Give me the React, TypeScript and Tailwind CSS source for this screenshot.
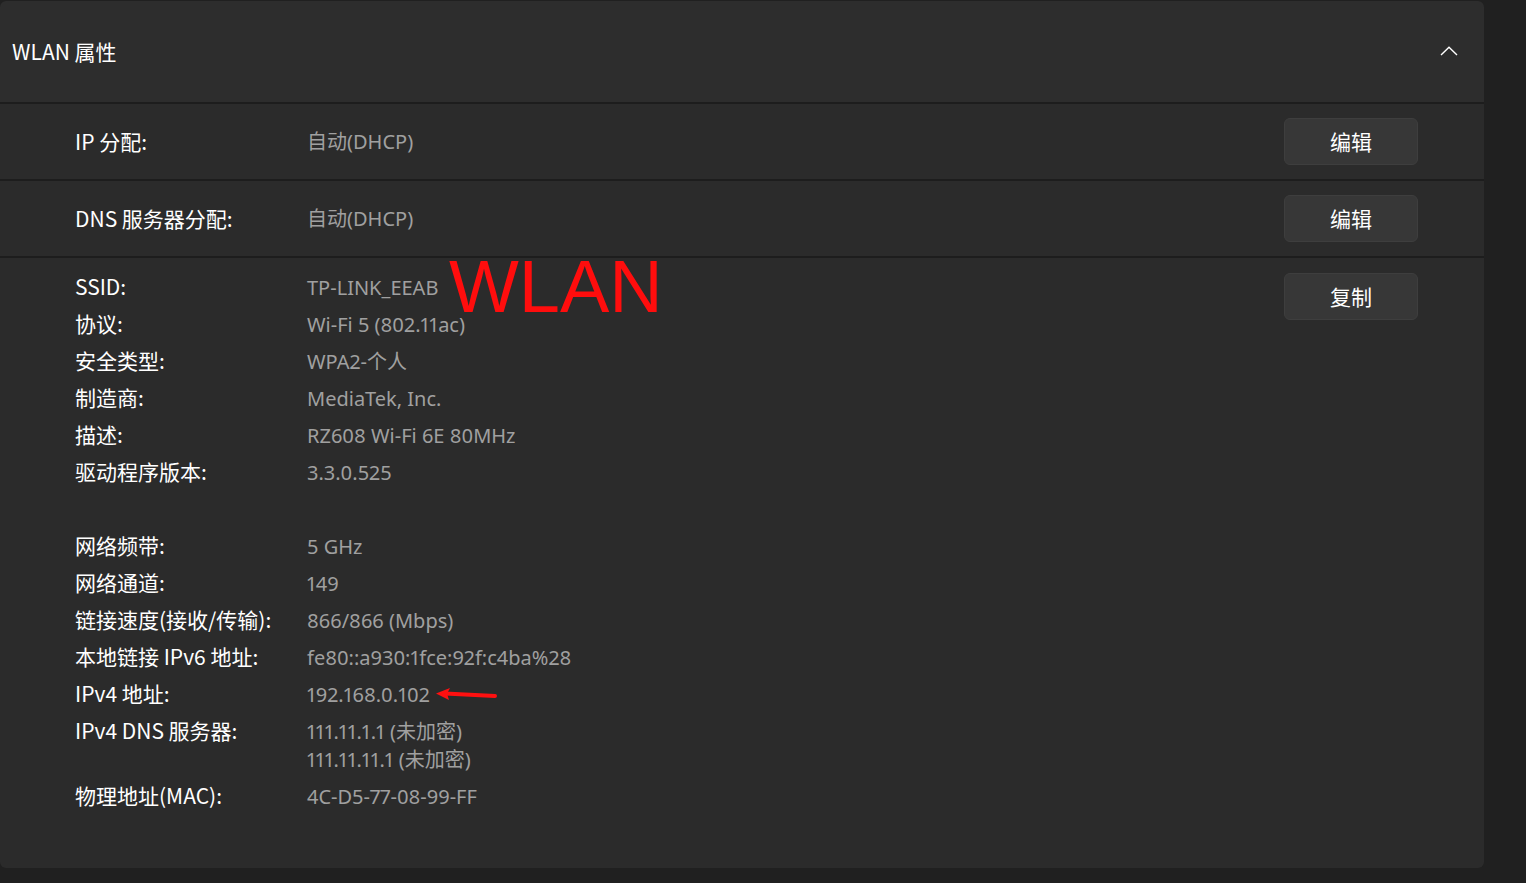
import React from "react";

const cjk = { fontFamily: '"Noto Sans CJK SC", sans-serif' };
const val = { fontFamily: '"Noto Sans", "Noto Sans CJK SC", sans-serif' };

type Row = { label: string; value: string[]; arrow?: boolean } | null;

const rows: Row[] = [
  { label: "SSID:", value: ["TP-LINK_EEAB"] },
  { label: "协议:", value: ["Wi-Fi 5 (802.11ac)"] },
  { label: "安全类型:", value: ["WPA2-个人"] },
  { label: "制造商:", value: ["MediaTek, Inc."] },
  { label: "描述:", value: ["RZ608 Wi-Fi 6E 80MHz"] },
  { label: "驱动程序版本:", value: ["3.3.0.525"] },
  null,
  { label: "网络频带:", value: ["5 GHz"] },
  { label: "网络通道:", value: ["149"] },
  { label: "链接速度(接收/传输):", value: ["866/866 (Mbps)"] },
  { label: "本地链接 IPv6 地址:", value: ["fe80::a930:1fce:92f:c4ba%28"] },
  { label: "IPv4 地址:", value: ["192.168.0.102"], arrow: true },
  { label: "IPv4 DNS 服务器:", value: ["111.11.1.1 (未加密)", "111.11.11.1 (未加密)"] },
  { label: "物理地址(MAC):", value: ["4C-D5-77-08-99-FF"] },
];

function Btn({ children }: { children: React.ReactNode }) {
  return (
    <button className="w-[134px] h-[47px] rounded-[6px] bg-[#373737] border border-[#3e3e3e] text-white text-[21px] leading-none flex items-center justify-center">
      {children}
    </button>
  );
}

function Arrow() {
  return (
    <svg className="ml-[5px]" width="64" height="14" viewBox="0 0 64 14" fill="none">
      <line x1="10" y1="5.5" x2="60" y2="8" stroke="#ff1010" strokeWidth="4" strokeLinecap="round" />
      <polygon points="1,5.5 15,0 12,5.8 14,12" fill="#ff1010" />
    </svg>
  );
}

export default function App() {
  return (
    <div className="w-[1526px] h-[883px] bg-[#202020] overflow-hidden" style={cjk}>
      <div className="pt-[1px] w-[1484px]">
        <div className="rounded-[6px] overflow-hidden bg-[#1d1d1d] flex flex-col gap-[2px]">
          <div className="h-[101px] bg-[#2d2d2d] flex items-center justify-between pl-[12px] pr-[26px] pb-[2px]">
            <span className="text-white text-[21px] leading-[28px]">WLAN 属性</span>
            <svg width="18" height="10" viewBox="0 0 18 10" fill="none">
              <polyline points="1,9 9,1.2 17,9" stroke="#ffffff" strokeWidth="1.4" />
            </svg>
          </div>
          <div className="h-[75px] bg-[#2b2b2b] flex items-center pl-[75px] pr-[66px]">
            <span className="w-[232px] text-white text-[21px] leading-[28px] -mt-[2px]">IP 分配:</span>
            <span className="flex-1 text-[#a0a0a0] text-[20px] leading-[28px] proportional-nums" style={val}>
              自动(DHCP)
            </span>
            <Btn>编辑</Btn>
          </div>
          <div className="h-[75px] bg-[#2b2b2b] flex items-center pl-[75px] pr-[66px]">
            <span className="w-[232px] text-white text-[21px] leading-[28px] -mt-[2px]">DNS 服务器分配:</span>
            <span className="flex-1 text-[#a0a0a0] text-[20px] leading-[28px] proportional-nums" style={val}>
              自动(DHCP)
            </span>
            <Btn>编辑</Btn>
          </div>
          <div className="relative h-[610px] bg-[#2b2b2b] flex items-start pl-[75px] pr-[66px] pt-[15px]">
            <div className="flex-1 flex flex-col gap-[9px] -mt-[1px]">
              {rows.map((r, i) =>
                r === null ? (
                  <div key={i} className="h-[28px]" />
                ) : (
                  <div key={i} className="flex leading-[28px]">
                    <span className="w-[232px] text-white text-[21px]">{r.label}</span>
                    <div className="flex flex-col text-[#a0a0a0] text-[20px] proportional-nums translate-y-[2px]" style={val}>
                      {r.value.map((v) => (
                        <span key={v} className="flex items-center">
                          {v}
                          {r.arrow ? <Arrow /> : null}
                        </span>
                      ))}
                    </div>
                  </div>
                )
              )}
            </div>
            <Btn>复制</Btn>
            <span
              className="absolute left-[449px] top-[-8px] text-[#ff0d0d] text-[74px] leading-none"
              style={{ fontFamily: '"Liberation Sans", Arial, sans-serif' }}
            >
              WLAN
            </span>
          </div>
        </div>
      </div>
    </div>
  );
}
